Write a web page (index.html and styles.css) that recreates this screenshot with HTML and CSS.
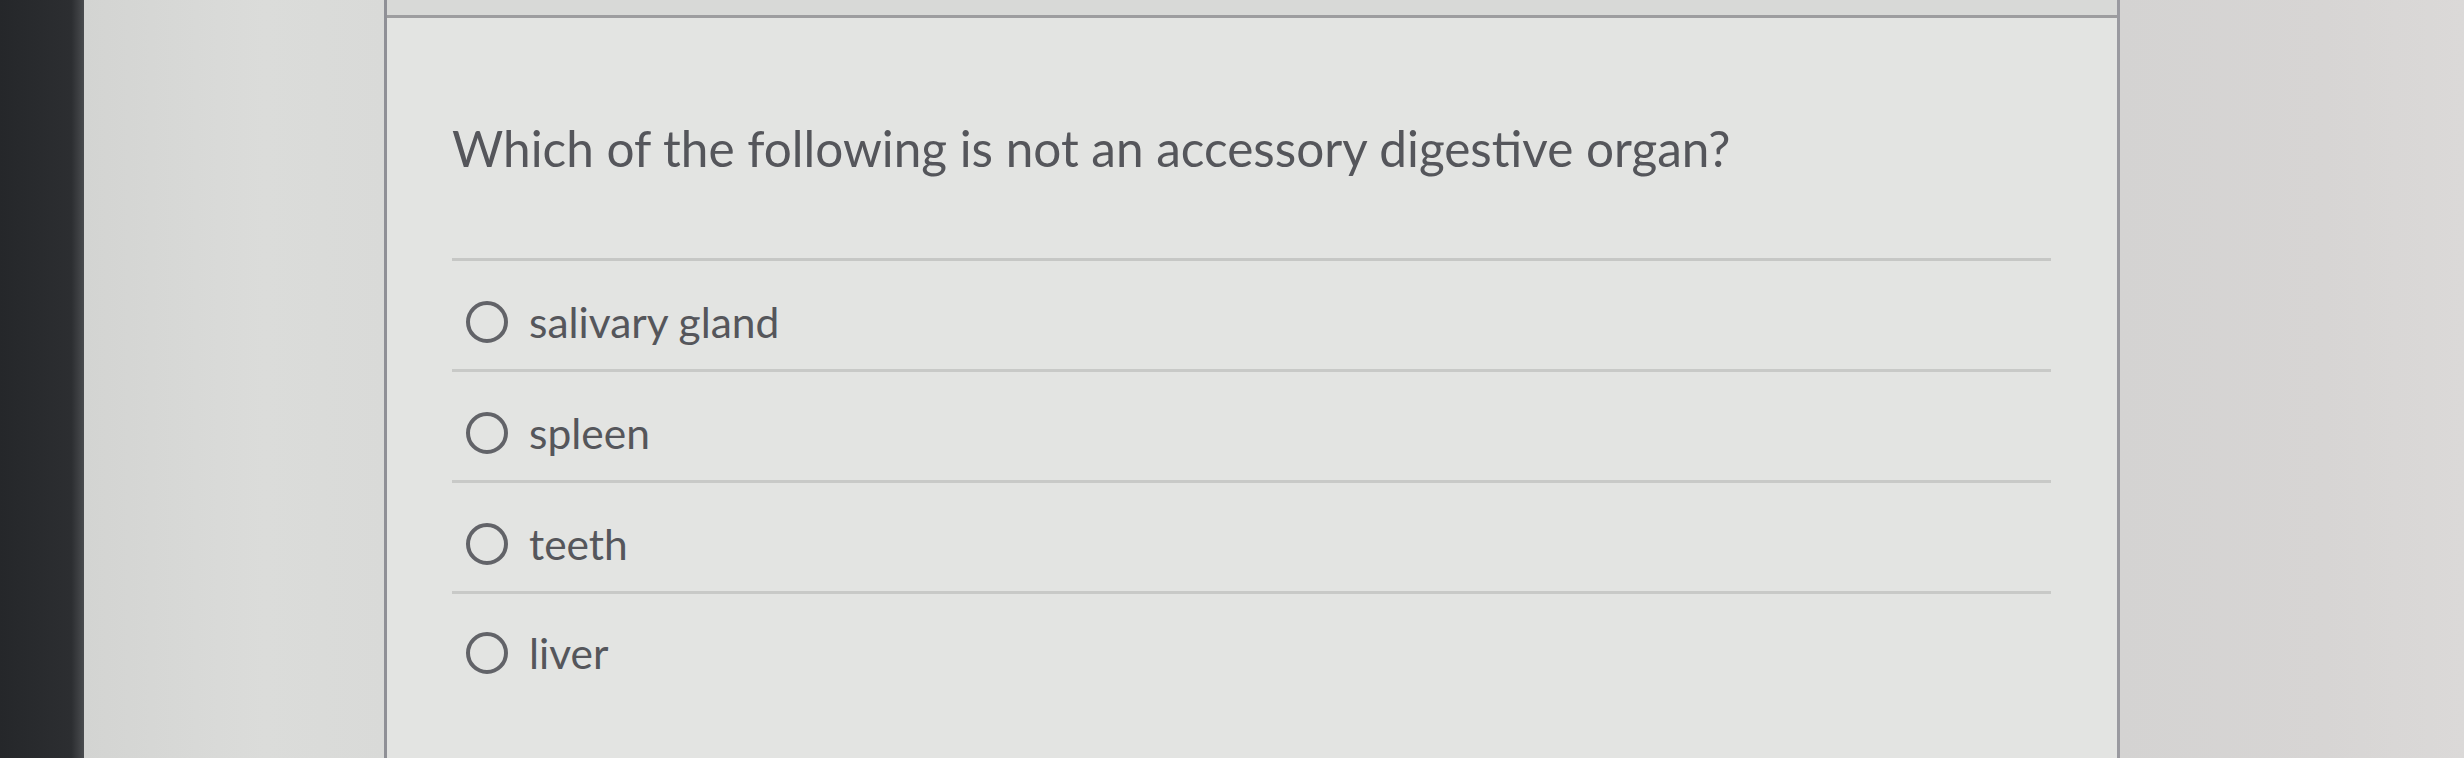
FILE: index.html
```html
<!DOCTYPE html>
<html lang="en">
<head>
<meta charset="utf-8">
<title>Quiz question</title>
<link rel="stylesheet" href="styles.css">
</head>
<body>
<div class="screen">
  <div class="bezel"></div>
  <div class="gutter-left"></div>
  <main class="card">
    <div class="card-top"></div>
    <div class="card-body">
      <h1 class="question">Which of the following is not an accessory digestive organ?</h1>
      <ul class="options">
        <li class="option"><span class="radio"></span><span class="label">salivary gland</span></li>
        <li class="option"><span class="radio"></span><span class="label">spleen</span></li>
        <li class="option"><span class="radio"></span><span class="label">teeth</span></li>
        <li class="option"><span class="radio"></span><span class="label">liver</span></li>
      </ul>
    </div>
  </main>
  <div class="gutter-right"></div>
</div>
</body>
</html>
```
FILE: styles.css
```css
html, body {
  margin: 0;
  padding: 0;
  width: 2464px;
  height: 758px;
  overflow: hidden;
  background: #d7d7d5;
}

.screen {
  display: flex;
  height: 758px;
  font-family: Lato, "Open Sans", "Liberation Sans", sans-serif;
  color: #55565b;
}

.bezel {
  width: 84px;
  flex: none;
  background: linear-gradient(to right, #25272a 0%, #2c2e31 85%, #4a4c4f 100%);
}

.gutter-left {
  width: 300px;
  flex: none;
  background: linear-gradient(to right, #d3d4d2, #dbdcda 60%, #d9dad8);
}

.card {
  width: 1730px;
  flex: none;
  display: flex;
  flex-direction: column;
  border-left: 3px solid #8f9096;
  border-right: 3px solid #9a9aa0;
  background: #e3e4e2;
}

.card-top {
  height: 15px;
  flex: none;
  background: #d8d9d7;
  border-bottom: 3px solid #9d9d9f;
}

.card-body {
  padding: 0 66px 0 65px;
}

.question {
  margin: 0;
  padding: 100px 0 80px;
  font-size: 49.5px;
  font-weight: 400;
  line-height: 60px;
  border-bottom: 3px solid #c6c7c5;
}

.options {
  list-style: none;
  margin: 0;
  padding: 0;
}

.option {
  display: flex;
  align-items: center;
  gap: 21px;
  height: 111px;
  box-sizing: border-box;
  padding-top: 14px;
  border-bottom: 3px solid #c8c9c7;
}

.option:last-child {
  border-bottom: none;
  padding-top: 6px;
}

.radio {
  width: 34px;
  height: 34px;
  flex: none;
  border: 4px solid #626368;
  border-radius: 50%;
  margin-left: 14px;
}

.label {
  font-size: 42.5px;
  line-height: 52px;
}

.gutter-right {
  flex: 1;
  background: linear-gradient(to right, #d4d3d2, #d7d5d4 60%, #dbd9d8);
}
```
